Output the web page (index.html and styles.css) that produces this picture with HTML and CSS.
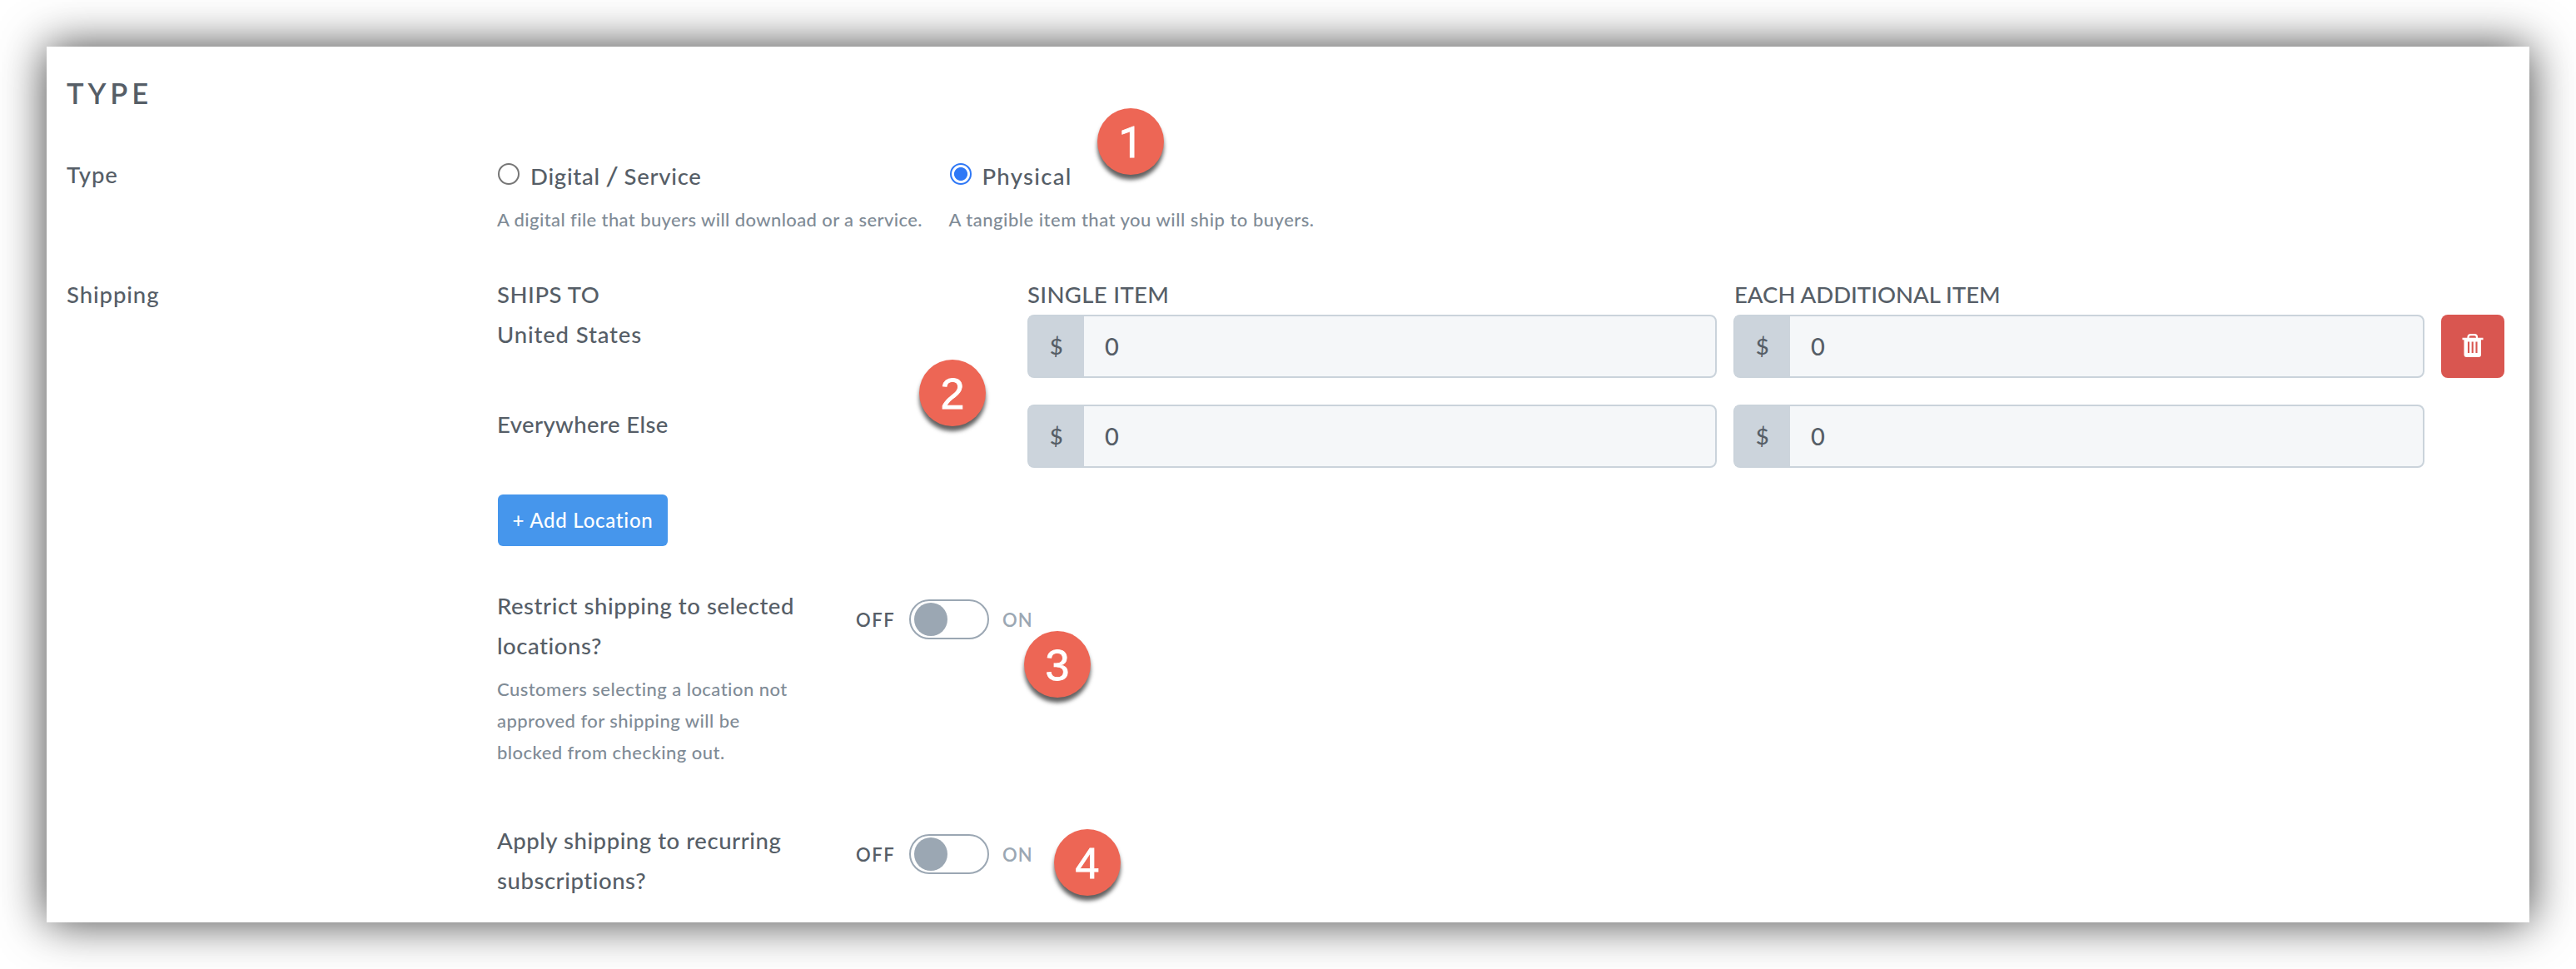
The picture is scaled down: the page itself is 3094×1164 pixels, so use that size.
FILE: index.html
```html
<!DOCTYPE html>
<html lang="en">
<head>
<meta charset="utf-8">
<title>Product type</title>
<link rel="stylesheet" href="styles.css">
</head>
<body>
<main class="panel">
  <h2 class="heading">TYPE</h2>

  <section class="row row-type">
    <div class="label"><span class="t-type">Type</span></div>
    <div class="options">
      <div class="option">
        <label class="choice"><span class="radio"></span><span class="t-digital">Digital <span class="slash">/</span> Service</span></label>
        <p class="help">A digital file that buyers will download or a service.</p>
      </div>
      <div class="option">
        <label class="choice"><span class="radio checked"></span><span class="t-physical">Physical</span></label>
        <p class="help t-tangible">A tangible item that you will ship to buyers.</p>
      </div>
    </div>
  </section>

  <section class="row row-shipping">
    <div class="label t-shipping">Shipping</div>
    <div class="content">
      <div class="rates">
        <div class="col-head">SHIPS TO</div>
        <div class="col-head t-single">SINGLE ITEM</div>
        <div class="col-head t-each">EACH ADDITIONAL ITEM</div>
        <div></div>

        <div class="place t-us">United States</div>
        <div class="money"><span class="addon">$</span><span class="value">0</span></div>
        <div class="money"><span class="addon">$</span><span class="value">0</span></div>
        <button class="delete" aria-label="Delete">
          <svg viewBox="0 0 26 28" width="26" height="28">
            <path d="M7.500 5.500V4Q7.500 1.200 10.500 1.200H15Q18 1.200 18 4V5.500" fill="none" stroke="#fff" stroke-width="2.200"/>
            <path d="M0.500 4.800H25.500V7.200H23V25Q23 28 20 28H5.500Q2.500 28 2.500 25V7.200H0.500Z" fill="#fff"/>
            <path d="M8 9.500V23M12.700 9.500V23M17.500 9.500V23" stroke="#d95650" stroke-width="2.100"/>
          </svg>
        </button>

        <div class="place t-else">Everywhere Else</div>
        <div class="money"><span class="addon">$</span><span class="value">0</span></div>
        <div class="money"><span class="addon">$</span><span class="value">0</span></div>
        <div></div>
      </div>

      <button class="add">+ Add Location</button>

      <div class="setting">
        <div class="setting-text">
          <div>Restrict shipping to selected<br>locations?</div>
          <p class="help">Customers selecting a location not<br>approved for shipping will be<br>blocked from checking out.</p>
        </div>
        <div class="switch"><span class="off">OFF</span><span class="track"><span class="knob"></span></span><span class="on">ON</span></div>
      </div>

      <div class="setting setting-last">
        <div class="setting-text">
          <div>Apply shipping to recurring<br>subscriptions?</div>
        </div>
        <div class="switch"><span class="off">OFF</span><span class="track"><span class="knob"></span></span><span class="on">ON</span></div>
      </div>
    </div>
  </section>

  <span class="badge badge-1">1</span>
  <span class="badge badge-2">2</span>
  <span class="badge badge-3">3</span>
  <span class="badge badge-4">4</span>
</main>
</body>
</html>
```
FILE: styles.css
```css
* { box-sizing: border-box; }
body {
  margin: 0;
  padding: 56px;
  height: 1164px;
  overflow: hidden;
  background: #fff;
  color: #565e67;
  font: 500 27.5px/48px Lato, "Open Sans", sans-serif;
  letter-spacing: 0.54px;
}
p, h2 { margin: 0; }
button { border: 0; padding: 0; font: inherit; }

.panel {
  position: relative;
  height: 1052px;
  padding: 32px 30px 0 24px;
  background: #fff;
  box-shadow: 0 0 52px rgba(0, 0, 0, 0.75);
}
.heading {
  font-size: 34.5px;
  font-weight: 600;
  line-height: 48px;
  letter-spacing: 4.9px;
}
.row { display: grid; grid-template-columns: 517px 1fr; align-items: start; }
.row-type { margin-top: 50px; }
.row-shipping { margin-top: 47px; }

.options { display: flex; padding-top: 2px; }
.option { width: 542.5px; white-space: nowrap; }
.choice { display: flex; }
.radio {
  width: 26px;
  height: 26px;
  margin: 8px 13px 0 1px;
  border: 2px solid #767676;
  border-radius: 50%;
}
.checked {
  border-color: #2f78f6;
  background: radial-gradient(circle, #2f78f6 7.6px, #fff 8.4px);
}
.slash { display: inline-block; transform: scale(1.25, 1.12); }
.help {
  margin-top: 9px;
  font-size: 22px;
  line-height: 38px;
  letter-spacing: 0.39px;
  color: #7f8b96;
}

.rates {
  display: grid;
  grid-template-columns: 617px 828px 830px 76px;
  grid-template-rows: 48px 108px 76px;
  column-gap: 20px;
  align-items: start;
}
.money {
  display: flex;
  height: 76px;
  border: 2px solid #cad3db;
  border-radius: 8px;
  background: #f5f7f9;
  line-height: 71px;
}
.addon { width: 66px; text-align: center; background: #ccd4dc; }
.value { padding-left: 25px; font-size: 29px; }
.delete {
  display: flex;
  align-items: center;
  justify-content: center;
  height: 76px;
  padding-bottom: 2px;
  border-radius: 8px;
  background: #d95650;
}
.add {
  display: block;
  width: 204px;
  height: 62px;
  margin: 32px 0 0 1px;
  border-radius: 6px;
  background: #4696ec;
  color: #fff;
  font-size: 24px;
  letter-spacing: 0.75px;
}

.setting { display: flex; align-items: flex-start; margin-top: 48px; }
.setting-last { margin-top: 63px; }
.setting-text { width: 431px; white-space: nowrap; }
.setting-text .help { letter-spacing: 0.46px; }
.switch {
  display: flex;
  align-items: center;
  padding-top: 15px;
  font-size: 22px;
}
.off, .on { padding-top: 2px; font-weight: 600; }
.off { width: 64px; letter-spacing: 1.5px; }
.on { margin-left: 16px; letter-spacing: 1px; color: #9ba7b3; }
.track {
  width: 96px;
  height: 48px;
  padding: 2px 4px;
  border: 2px solid #9ba7b3;
  border-radius: 24px;
}
.knob { display: block; width: 40px; height: 40px; border-radius: 50%; background: #9ba7b3; }

/* numbered markers laid over the form */
.badge {
  position: absolute;
  width: 80px;
  height: 80px;
  border-radius: 50%;
  background: #ed6655;
  box-shadow: 0 6px 5px rgba(0, 0, 0, 0.62);
  color: #fff;
  font: 52px/83px "Liberation Sans", Arial, sans-serif;
  letter-spacing: 0;
  text-align: center;
  -webkit-text-stroke: 0.8px #fff;
}
.badge-1 { left: 1262px; top: 74px; font-family: Roboto, sans-serif; }
.badge-2 { left: 1048px; top: 376px; }
.badge-3 { left: 1174px; top: 702px; }
.badge-4 { left: 1210px; top: 940px; }

/* tracking adjustments */
.t-type, .t-us { letter-spacing: 0.85px; }
.t-shipping { letter-spacing: 0.9px; }
.t-digital { letter-spacing: 0.74px; }
.t-physical { letter-spacing: 1.3px; }
.t-tangible { letter-spacing: 0.5px; }
.t-single { letter-spacing: 0.35px; }
.t-each { padding-left: 1px; letter-spacing: 0; }
.t-else { letter-spacing: 0.41px; }
```
